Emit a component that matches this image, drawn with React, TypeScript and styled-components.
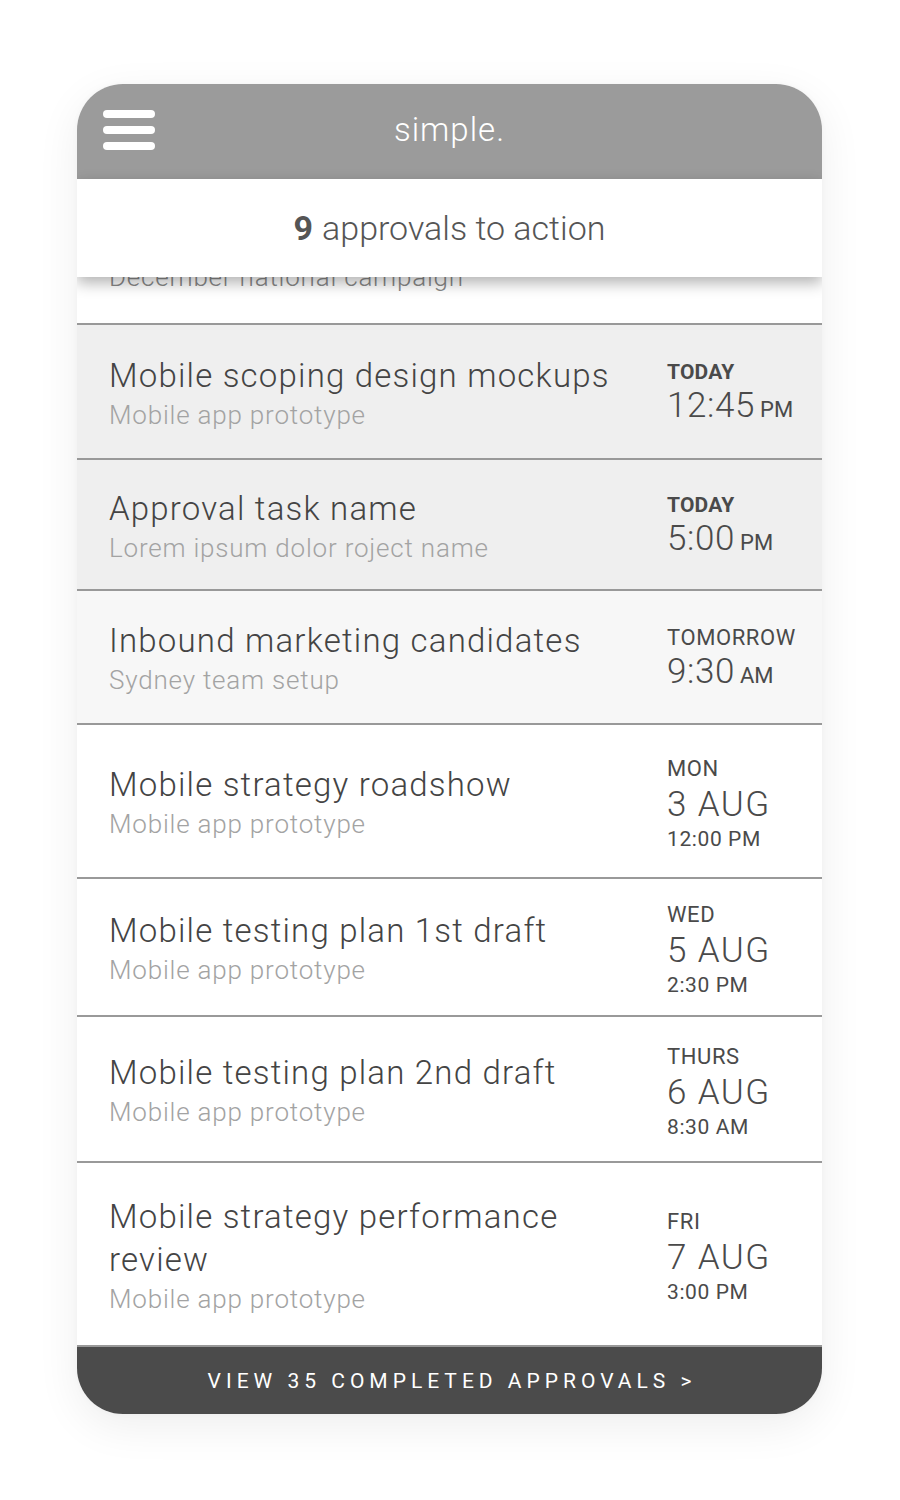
import React from 'react';
import styled, { createGlobalStyle } from 'styled-components';

interface Approval {
  title: string;
  project: string;
  tone: 'strong' | 'soft' | 'plain';
  height: number;
  day: string;
  dayBold?: boolean;
  date?: string;
  time: string;
  suffix?: string;
}

const approvals: Approval[] = [
  { title: 'Mobile scoping design mockups', project: 'Mobile app prototype', tone: 'strong', height: 135, day: 'TODAY', dayBold: true, time: '12:45', suffix: 'PM' },
  { title: 'Approval task name', project: 'Lorem ipsum dolor roject name', tone: 'strong', height: 131, day: 'TODAY', dayBold: true, time: '5:00', suffix: 'PM' },
  { title: 'Inbound marketing candidates', project: 'Sydney team setup', tone: 'soft', height: 134, day: 'TOMORROW', time: '9:30', suffix: 'AM' },
  { title: 'Mobile strategy roadshow', project: 'Mobile app prototype', tone: 'plain', height: 154, day: 'MON', date: '3 AUG', time: '12:00 PM' },
  { title: 'Mobile testing plan 1st draft', project: 'Mobile app prototype', tone: 'plain', height: 138, day: 'WED', date: '5 AUG', time: '2:30 PM' },
  { title: 'Mobile testing plan 2nd draft', project: 'Mobile app prototype', tone: 'plain', height: 146, day: 'THURS', date: '6 AUG', time: '8:30 AM' },
  { title: 'Mobile strategy performance review', project: 'Mobile app prototype', tone: 'plain', height: 184, day: 'FRI', date: '7 AUG', time: '3:00 PM' },
];

const GlobalStyle = createGlobalStyle`
  body {
    margin: 0;
    background: #ffffff;
    font-family: Roboto, "Liberation Sans", sans-serif;
  }
`;

const Page = styled.div`
  padding: 84px 0 86px 77px;
`;

const Phone = styled.div`
  width: 745px;
  border-radius: 46px;
  overflow: hidden;
  background: #fff;
  box-shadow: 0 12px 44px rgba(0, 0, 0, 0.07), 0 0 6px rgba(0, 0, 0, 0.03);
  display: flex;
  flex-direction: column;
`;

const Header = styled.header`
  height: 95px;
  background: #9b9b9b;
  display: grid;
  grid-template-columns: 110px 1fr 110px;
  align-items: center;
`;

const Burger = styled.button`
  margin-left: 26px;
  margin-top: -3px;
  width: 52px;
  padding: 0;
  border: none;
  background: none;
  display: flex;
  flex-direction: column;
  gap: 8px;
  span {
    display: block;
    height: 8px;
    border-radius: 4px;
    background: #fff;
  }
`;

const Brand = styled.div`
  text-align: center;
  color: #fff;
  font-size: 33px;
  letter-spacing: 1px;
  font-weight: 300;
  margin-top: -4px;
`;

const Summary = styled.div`
  position: relative;
  z-index: 2;
  height: 98px;
  background: #fff;
  display: flex;
  align-items: center;
  justify-content: center;
  color: #555;
  font-size: 34px;
  font-weight: 300;
  box-shadow: 0 6px 14px rgba(0, 0, 0, 0.3);
  b {
    font-weight: 700;
    margin-right: 9px;
  }
`;

const ScrolledRow = styled.div`
  height: 46px;
  overflow: hidden;
  background: #fff;
  padding-left: 32px;
  border-bottom: 2px solid #999;
  span {
    display: block;
    margin-top: -17px;
    font-size: 26px;
    letter-spacing: 0.8px;
    line-height: 34px;
    font-weight: 300;
    color: #888;
  }
`;

const Row = styled.div<{ $tone: Approval['tone']; $height: number }>`
  box-sizing: border-box;
  min-height: ${(p) => p.$height}px;
  display: flex;
  align-items: center;
  gap: 20px;
  padding: 8px 22px 8px 32px;
  border-bottom: 2px solid #999;
  background: ${(p) => (p.$tone === 'strong' ? '#efefef' : p.$tone === 'soft' ? '#f7f7f7' : '#fff')};
`;

const Info = styled.div`
  flex: 1;
  min-width: 0;
  padding-top: 3px;
`;

const Title = styled.div`
  font-size: 33px;
  letter-spacing: 1.2px;
  line-height: 43px;
  font-weight: 300;
  color: #444;
`;

const Project = styled.div`
  font-size: 26px;
  letter-spacing: 0.8px;
  line-height: 36px;
  font-weight: 300;
  color: #a3a3a3;
`;

const When = styled.div`
  width: 133px;
  flex-shrink: 0;
  color: #4a4a4a;
  padding-top: 3px;
`;

const Day = styled.div<{ $bold?: boolean }>`
  font-size: ${(p) => (p.$bold ? '21px' : '22px')};
  letter-spacing: ${(p) => (p.$bold ? '0.2px' : '0.6px')};
  line-height: 30px;
  font-weight: ${(p) => (p.$bold ? 700 : 400)};
`;

const DateLine = styled.div`
  font-size: 35px;
  letter-spacing: 1.4px;
  line-height: 42px;
  font-weight: 300;
`;

const Time = styled.div<{ $big?: boolean }>`
  font-size: ${(p) => (p.$big ? '35px' : '21px')};
  letter-spacing: ${(p) => (p.$big ? '0.6px' : '0.6px')};
  line-height: ${(p) => (p.$big ? '38px' : '26px')};
  font-weight: ${(p) => (p.$big ? 300 : 400)};
  small {
    font-size: 22px;
    font-weight: 400;
    letter-spacing: 0;
    margin-left: 5px;
  }
`;

const Footer = styled.button`
  height: 67px;
  border: none;
  background: #4b4b4b;
  color: #fff;
  font-family: inherit;
  font-size: 21px;
  letter-spacing: 5px;
  font-weight: 400;
  padding: 0 0 0 5px;
`;

export default function App() {
  return (
    <>
      <GlobalStyle />
      <Page>
        <Phone>
          <Header>
            <Burger aria-label="Menu">
              <span />
              <span />
              <span />
            </Burger>
            <Brand>simple.</Brand>
          </Header>
          <Summary>
            <b>9</b> approvals to action
          </Summary>
          <ScrolledRow>
            <span>December national campaign</span>
          </ScrolledRow>
          {approvals.map((a) => (
            <Row key={a.title} $tone={a.tone} $height={a.height}>
              <Info>
                <Title>{a.title}</Title>
                <Project>{a.project}</Project>
              </Info>
              <When>
                <Day $bold={a.dayBold}>{a.day}</Day>
                {a.date && <DateLine>{a.date}</DateLine>}
                {a.date ? (
                  <Time>{a.time}</Time>
                ) : (
                  <Time $big>
                    {a.time}
                    <small>{a.suffix}</small>
                  </Time>
                )}
              </When>
            </Row>
          ))}
          <Footer>VIEW 35 COMPLETED APPROVALS &gt;</Footer>
        </Phone>
      </Page>
    </>
  );
}
